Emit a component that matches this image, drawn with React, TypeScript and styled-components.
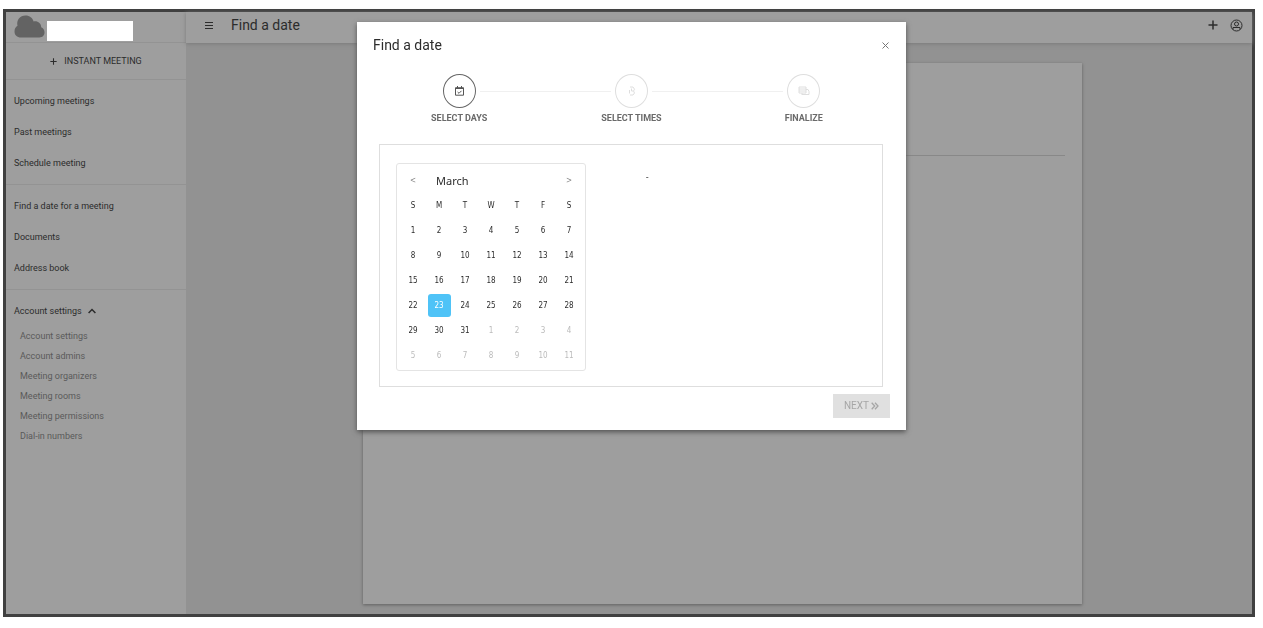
import React from "react";
import styled, { createGlobalStyle, css } from "styled-components";

const GlobalStyle = createGlobalStyle`
  *, *::before, *::after { box-sizing: border-box; }
  body {
    margin: 0;
    background: #fff;
    color: #2c2c2c;
    font: 9px/20px Roboto, "Liberation Sans", sans-serif;
  }
  button { font: inherit; color: inherit; border: 0; padding: 0; background: none; cursor: pointer; }
  a { color: inherit; text-decoration: none; }
  ul, ol { list-style: none; margin: 0; padding: 0; }
  h1, h2 { margin: 0; font-weight: 400; }
  svg { display: block; flex: none; }
`;

const Page = styled.div`
  display: flex;
  min-height: 100vh;
  padding: 9px 8px 11px 3px;
`;

const Frame = styled.div`
  flex: 1;
  display: flex;
  border: 3px solid #404040;
  background: #929292;
`;

const Sidebar = styled.aside`
  flex: none;
  width: 180px;
  background: #9e9e9e;
`;

const Brand = styled.div`
  display: flex;
  align-items: flex-start;
  gap: 2px;
  height: 31px;
  padding: 3px 8px 0;
  border-bottom: 1px solid #939393;
`;

const BrandName = styled.div`
  width: 86px;
  height: 20px;
  margin-top: 6px;
  background: #fff;
`;

const InstantRow = styled.div`
  display: flex;
  justify-content: center;
  height: 37px;
  border-bottom: 1px solid #939393;
`;

const InstantButton = styled.button`
  display: flex;
  align-items: center;
  gap: 7px;
`;

const NavGroup = styled.ul`
  padding: 5px 8px 6px;
  border-bottom: 1px solid #939393;
  &:last-child { border-bottom: 0; }
`;

const NavLink = styled.a`
  display: flex;
  align-items: center;
  gap: 6px;
  height: 31px;
`;

const SubLink = styled.a`
  display: block;
  padding-left: 6px;
  color: #5a5a5a;
`;

const Main = styled.main`
  flex: 1;
  display: flex;
  flex-direction: column;
`;

const TopBar = styled.header`
  display: flex;
  align-items: center;
  height: 31px;
  padding: 0 9px 5px 18px;
  background: #9e9e9e;
  box-shadow: 0 1px 4px #7a7a7a;
`;

const MenuButton = styled.button`
  margin-right: 17px;
`;

const PageTitle = styled.h1`
  flex: 1;
  font-size: 14px;
`;

const BarActions = styled.div`
  display: flex;
  align-items: center;
  gap: 12px;
`;

const Content = styled.div`
  flex: 1;
  display: flex;
  padding: 20px 170px 10px 177px;
`;

const Paper = styled.section`
  flex: 1;
  padding: 0 17px;
  background: #9e9e9e;
  box-shadow: 0 1px 3px #606060;
`;

const PaperHead = styled.div`
  height: 93px;
  border-bottom: 1px solid #888;
`;

const Overlay = styled.div`
  position: fixed;
  inset: 0;
  display: flex;
  justify-content: center;
  align-items: flex-start;
  padding-top: 22px;
`;

const Dialog = styled.div`
  width: 549px;
  padding: 13px 16px 12px;
  background: #fff;
  box-shadow: 0 2px 5px #505050;
`;

const DialogHead = styled.header`
  display: flex;
  align-items: center;
  justify-content: space-between;
`;

const DialogTitle = styled.h2`
  font-size: 14px;
`;

const Steps = styled.ol`
  display: grid;
  grid-template-columns: repeat(3, 1fr);
  margin-top: 19px;
`;

const Step = styled.li`
  text-align: center;
  color: #6a6a6a;
  font-weight: 700;
`;

const StepTrack = styled.div`
  display: flex;
  align-items: center;
  gap: 4px;
`;

const StepLine = styled.span<{ $hidden?: boolean }>`
  flex: 1;
  height: 1px;
  background: ${(p) => (p.$hidden ? "transparent" : "#f0f0f0")};
`;

const StepCircle = styled.span<{ $active?: boolean }>`
  display: flex;
  align-items: center;
  justify-content: center;
  width: 33px;
  height: 34px;
  border-radius: 50%;
  border: ${(p) => (p.$active ? "1px solid #666" : "1px solid #dedede")};
  color: ${(p) => (p.$active ? "#555" : "#dedede")};
`;

const Panel = styled.div`
  display: flex;
  gap: 60px;
  margin: 16px 7px 0 6px;
  padding: 18px 16px 15px;
  border: 1px solid #dedede;
`;

const Calendar = styled.div`
  width: 190px;
  padding: 4px 3px 2px;
  border: 1px solid #e4e4e4;
  border-radius: 3px;
  font-family: "DejaVu Sans Condensed", "DejaVu Sans", sans-serif;
  font-size: 8px;
`;

const MonthBar = styled.div`
  display: flex;
  align-items: center;
  height: 25px;
`;

const MonthButton = styled.button`
  width: 26px;
  color: #888;
`;

const MonthName = styled.div`
  flex: 1;
  padding-left: 10px;
  font-family: "Noto Sans", sans-serif;
  font-size: 11px;
`;

const DayTable = styled.table`
  width: 100%;
  table-layout: fixed;
  border-collapse: collapse;
  th, td { height: 25px; padding: 0; text-align: center; }
  th { font-weight: 400; }
`;

const Day = styled.button<{ $muted?: boolean; $selected?: boolean }>`
  display: block;
  width: 23px;
  height: 23px;
  margin: 0 auto;
  border-radius: 3px;
  ${(p) => p.$muted && css`color: #bbb;`}
  ${(p) => p.$selected && css`background: #4fc3f7; color: #fff;`}
`;

const Selection = styled.p`
  margin: 4px 0 0;
`;

const DialogFoot = styled.footer`
  display: flex;
  justify-content: flex-end;
  margin-top: 7px;
`;

const NextButton = styled.button`
  display: flex;
  align-items: center;
  justify-content: center;
  gap: 2px;
  width: 57px;
  height: 24px;
  background: #e0e0e0;
  color: #a6a6a6;
  font-size: 10px;
`;

const PlusIcon = ({ size, stroke }: { size: number; stroke: number }) => (
  <svg width={size} height={size} viewBox="0 0 10 10" stroke="currentColor" strokeWidth={stroke} aria-hidden="true">
    <path d="M5 0.500V9.500M0.500 5H9.500" />
  </svg>
);

const CloudIcon = () => (
  <svg width="31" height="23" viewBox="0 0 31 23" fill="#636363" aria-hidden="true">
    <path d="M7 22.500C3 22.500 0.500 20 0.500 16.500C0.500 13.800 1.700 11.700 3.500 10.800C2.200 5.300 6 0.600 11.500 0.600C15.700 0.600 18.600 3 19.600 6.500C23.500 5.600 27.200 8.200 27.200 12.200C29.300 12.900 30.500 15 30.500 17.300C30.500 20.500 28.500 22.500 25.500 22.500Z" />
  </svg>
);

const UserIcon = () => (
  <svg width="13" height="13" viewBox="0 0 13 13" fill="none" stroke="currentColor" aria-hidden="true">
    <circle cx="6.500" cy="6.500" r="5.500" />
    <circle cx="6.500" cy="5" r="2" />
    <path d="M3 10.500V8.500H10V10.500" />
  </svg>
);

const CalendarCheckIcon = () => (
  <svg width="9" height="10" viewBox="0 0 9 10" fill="none" stroke="currentColor" aria-hidden="true">
    <path d="M0.500 1.700H8.500V9.200H0.500ZM0.500 2.500H8.500M2.500 0V2M6.500 0V2M2.600 6L4 7.300L6.500 4.800" />
  </svg>
);

const ClockIcon = () => (
  <svg width="8" height="10" viewBox="0 0 8 10" fill="none" stroke="currentColor" aria-hidden="true">
    <path d="M2 1H5L6.500 3.200L5.500 5L6.500 7L5 9H2M3.500 2.500V5H5M1.500 4V7.500" />
  </svg>
);

const FinalizeIcon = () => (
  <svg width="12" height="10" viewBox="0 0 12 10" fill="none" stroke="currentColor" aria-hidden="true">
    <path d="M1 1H8V7H1ZM1 3H8M1 5H8M8 3.500H10L11 5.500V8.500H4M4 7V9" />
  </svg>
);

const meetingLinks = ["Upcoming meetings", "Past meetings", "Schedule meeting"];
const toolLinks = ["Find a date for a meeting", "Documents", "Address book"];
const accountLinks = [
  "Account settings",
  "Account admins",
  "Meeting organizers",
  "Meeting rooms",
  "Meeting permissions",
  "Dial-in numbers",
];
const steps = [
  { label: "SELECT DAYS", icon: <CalendarCheckIcon /> },
  { label: "SELECT TIMES", icon: <ClockIcon /> },
  { label: "FINALIZE", icon: <FinalizeIcon /> },
];
const weekdays = ["S", "M", "T", "W", "T", "F", "S"];
const daysInMonth = 31;
const selectedDay = 23;

const NavList = ({ items }: { items: string[] }) => (
  <NavGroup>
    {items.map((item) => (
      <li key={item}>
        <NavLink href="#">{item}</NavLink>
      </li>
    ))}
  </NavGroup>
);

export default function App() {
  return (
    <>
      <GlobalStyle />
      <Page>
        <Frame>
          <Sidebar>
            <Brand>
              <CloudIcon />
              <BrandName />
            </Brand>
            <InstantRow>
              <InstantButton type="button">
                <PlusIcon size={7} stroke={1.5} />
                INSTANT MEETING
              </InstantButton>
            </InstantRow>
            <nav>
              <NavList items={meetingLinks} />
              <NavList items={toolLinks} />
              <NavGroup>
                <li>
                  <NavLink href="#">
                    Account settings
                    <svg width="8" height="6" viewBox="0 0 8 6" fill="none" stroke="currentColor" strokeWidth="1.500" aria-hidden="true">
                      <path d="M0.600 5L4 1.500L7.400 5" />
                    </svg>
                  </NavLink>
                  <ul>
                    {accountLinks.map((item) => (
                      <li key={item}>
                        <SubLink href="#">{item}</SubLink>
                      </li>
                    ))}
                  </ul>
                </li>
              </NavGroup>
            </nav>
          </Sidebar>
          <Main>
            <TopBar>
              <MenuButton type="button" aria-label="Menu">
                <svg width="10" height="8" viewBox="0 0 10 8" stroke="currentColor" aria-hidden="true">
                  <path d="M1 1.500H9M1 4.500H9M1 7.500H9" />
                </svg>
              </MenuButton>
              <PageTitle>Find a date</PageTitle>
              <BarActions>
                <button type="button" aria-label="Add">
                  <PlusIcon size={10} stroke={1.5} />
                </button>
                <button type="button" aria-label="Account">
                  <UserIcon />
                </button>
              </BarActions>
            </TopBar>
            <Content>
              <Paper>
                <PaperHead />
              </Paper>
            </Content>
          </Main>
        </Frame>
      </Page>
      <Overlay>
        <Dialog role="dialog" aria-labelledby="dialog-title">
          <DialogHead>
            <DialogTitle id="dialog-title">Find a date</DialogTitle>
            <button type="button" aria-label="Close">
              <svg width="9" height="9" viewBox="0 0 9 9" stroke="#777" aria-hidden="true">
                <path d="M1.500 1.500L7.500 7.500M7.500 1.500L1.500 7.500" />
              </svg>
            </button>
          </DialogHead>
          <Steps>
            {steps.map((step, i) => (
              <Step key={step.label}>
                <StepTrack>
                  <StepLine $hidden={i === 0} />
                  <StepCircle $active={i === 0}>{step.icon}</StepCircle>
                  <StepLine $hidden={i === steps.length - 1} />
                </StepTrack>
                {step.label}
              </Step>
            ))}
          </Steps>
          <Panel>
            <Calendar>
              <MonthBar>
                <MonthButton type="button" aria-label="Previous month">&lt;</MonthButton>
                <MonthName>March</MonthName>
                <MonthButton type="button" aria-label="Next month">&gt;</MonthButton>
              </MonthBar>
              <DayTable>
                <thead>
                  <tr>
                    {weekdays.map((d, i) => (
                      <th key={i} scope="col">{d}</th>
                    ))}
                  </tr>
                </thead>
                <tbody>
                  {[0, 1, 2, 3, 4, 5].map((week) => (
                    <tr key={week}>
                      {weekdays.map((_, i) => {
                        const n = week * 7 + i + 1;
                        const muted = n > daysInMonth;
                        return (
                          <td key={n}>
                            <Day type="button" $muted={muted} $selected={n === selectedDay}>
                              {muted ? n - daysInMonth : n}
                            </Day>
                          </td>
                        );
                      })}
                    </tr>
                  ))}
                </tbody>
              </DayTable>
            </Calendar>
            <Selection>-</Selection>
          </Panel>
          <DialogFoot>
            <NextButton type="button" disabled>
              NEXT
              <svg width="8" height="8" viewBox="0 0 8 8" fill="none" stroke="currentColor" strokeWidth="1.300" aria-hidden="true">
                <path d="M0.700 0.800L3.700 4L0.700 7.200M4 0.800L7 4L4 7.200" />
              </svg>
            </NextButton>
          </DialogFoot>
        </Dialog>
      </Overlay>
    </>
  );
}
